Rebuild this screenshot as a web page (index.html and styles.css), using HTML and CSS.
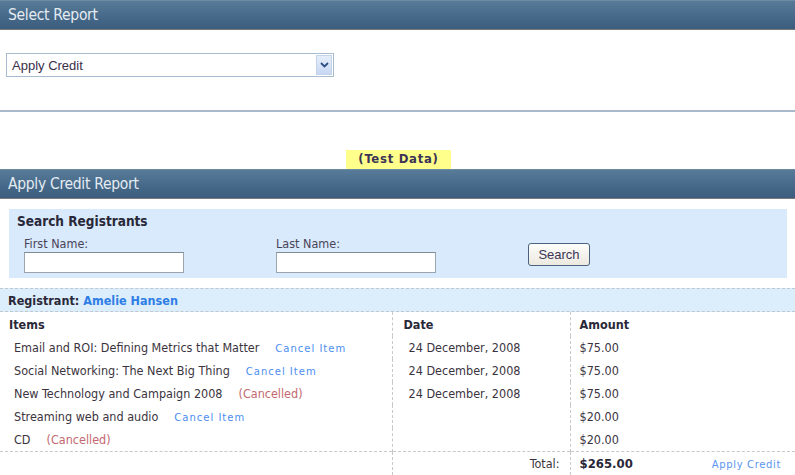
FILE: index.html
```html
<!DOCTYPE html>
<html>
<head>
<meta charset="utf-8">
<link rel="stylesheet" href="styles.css">
</head>
<body>
<div class="hdr"><span class="hdr-title">Select Report</span></div>
<div class="select-area">
  <div class="select">
    <span class="select-text">Apply Credit</span>
    <span class="select-btn"><svg width="9" height="6" viewBox="0 0 9 6"><path d="M1 1 L4.5 4.5 L8 1" fill="none" stroke="#2d4f86" stroke-width="1.8"/></svg></span>
  </div>
</div>
<div class="test-area"><span class="test">(Test Data)</span></div>
<div class="hdr"><span class="hdr-title">Apply Credit Report</span></div>
<div class="search">
  <div class="search-title">Search Registrants</div>
  <div class="search-row">
    <div class="field">
      <label class="lbl">First Name:</label>
      <div class="input"></div>
    </div>
    <div class="field">
      <label class="lbl">Last Name:</label>
      <div class="input"></div>
    </div>
    <div class="btn">Search</div>
  </div>
</div>
<div class="registrant"><b>Registrant:</b> <span class="name">Amelie Hansen</span></div>
<table class="items">
  <colgroup><col class="w1"><col class="w2"><col></colgroup>
  <tr class="head">
    <th class="c1">Items</th><th class="c2">Date</th><th class="c3">Amount</th>
  </tr>
  <tr>
    <td class="c1"><span class="it">Email and ROI: Defining Metrics that Matter</span><span class="cancel">Cancel Item</span></td>
    <td class="c2"><span class="dt">24 December, 2008</span></td><td class="c3">$75.00</td>
  </tr>
  <tr>
    <td class="c1"><span class="it">Social Networking: The Next Big Thing</span><span class="cancel">Cancel Item</span></td>
    <td class="c2"><span class="dt">24 December, 2008</span></td><td class="c3">$75.00</td>
  </tr>
  <tr>
    <td class="c1"><span class="it">New Technology and Campaign 2008</span><span class="cancelled">(Cancelled)</span></td>
    <td class="c2"><span class="dt">24 December, 2008</span></td><td class="c3">$75.00</td>
  </tr>
  <tr>
    <td class="c1"><span class="it">Streaming web and audio</span><span class="cancel">Cancel Item</span></td>
    <td class="c2"></td><td class="c3">$20.00</td>
  </tr>
  <tr>
    <td class="c1"><span class="it">CD</span><span class="cancelled">(Cancelled)</span></td>
    <td class="c2"></td><td class="c3">$20.00</td>
  </tr>
  <tr class="total">
    <td class="c1"></td>
    <td class="c2 tl">Total:</td>
    <td class="c3"><span class="sum">$265.00</span><span class="apply">Apply Credit</span></td>
  </tr>
</table>
</body>
</html>
```

FILE: styles.css
```css
html, body {
  margin: 0;
  padding: 0;
  background: #fff;
  font-family: "DejaVu Sans Condensed", "DejaVu Sans", sans-serif;
  font-size: 12.5px;
  color: #3b3440;
}
.hdr {
  height: 28px;
  background: linear-gradient(#587b99, #486b8b 50%, #3c5d7d);
  border-top: 1px solid #6d8aa3;
  border-bottom: 1px solid #7a7a7a;
  display: flex;
  align-items: center;
  padding-left: 8px;
}
.hdr-title {
  color: #e4ebf1;
  font-size: 15.5px;
  letter-spacing: -0.3px;
}
.select-area {
  height: 82px;
  border-bottom: 2px solid #a7b9ca;
  padding: 23px 0 0 6px;
  box-sizing: border-box;
}
.select {
  width: 328px;
  height: 24px;
  box-sizing: border-box;
  border: 1px solid #a8bccf;
  display: flex;
  align-items: center;
  justify-content: space-between;
  padding: 0 1px 0 5px;
}
.select-text {
  font-family: "Liberation Sans", sans-serif;
  font-size: 13px;
  color: #3a2f4a;
}
.select-btn {
  width: 16px;
  height: 20px;
  background: linear-gradient(#e6eefa, #c8d8f3);
  border: 1px solid #c4d3ea;
  box-sizing: border-box;
  display: flex;
  align-items: center;
  justify-content: center;
}
.test-area {
  height: 57px;
  display: flex;
  justify-content: center;
  align-items: flex-end;
}
.test {
  background: #ffff8c;
  font-weight: bold;
  font-size: 13px;
  color: #3b3454;
  padding: 1px 12px 0 12px;
  height: 19px;
  box-sizing: border-box;
  margin-right: -2px;
  letter-spacing: 0.7px;
}
.search {
  margin: 10px 8px 0 9px;
  background: #d8eafc;
  height: 69px;
  box-sizing: border-box;
  padding: 4px 0 0 8px;
}
.search-title {
  font-weight: bold;
  font-size: 13.5px;
  color: #2a2838;
}
.search-row {
  display: flex;
  align-items: flex-end;
  padding-left: 7px;
  margin-top: 8px;
}
.field {
  display: flex;
  flex-direction: column;
  width: 252px;
}
.lbl {
  color: #4a4358;
  font-size: 12.5px;
  line-height: 14px;
}
.input {
  width: 160px;
  height: 21px;
  box-sizing: border-box;
  margin-top: 1px;
  background: #fff;
  border: 1px solid #9aa4ae;
  border-top-color: #7f8a96;
}
.btn {
  width: 62px;
  height: 23px;
  box-sizing: border-box;
  border: 1px solid #4a6280;
  border-radius: 3px;
  background: linear-gradient(#fdfdfb, #ece9e0);
  font-family: "Liberation Sans", sans-serif;
  font-size: 13px;
  color: #3c3455;
  display: flex;
  align-items: center;
  justify-content: center;
  margin-bottom: 7px;
}
.registrant {
  margin-top: 10px;
  background: #dcedfc;
  border-top: 1px dashed #bfc7cf;
  border-bottom: 1px dashed #bfc7cf;
  height: 24px;
  box-sizing: border-box;
  padding-left: 8px;
  display: flex;
  align-items: center;
  font-size: 12.5px;
  color: #2a2838;
}
.registrant b { margin-right: 4px; }
.name {
  color: #2f7ee6;
  font-weight: bold;
}
.items {
  width: 100%;
  border-collapse: collapse;
  table-layout: fixed;
}
.w1 { width: 392px; }
.w2 { width: 178px; }
.items th, .items td {
  text-align: left;
  vertical-align: middle;
  white-space: nowrap;
}
.items th {
  font-weight: bold;
  height: 24px;
  padding: 1px 0 0 0;
  box-sizing: border-box;
  font-size: 12.5px;
  color: #2a2838;
}
.items td {
  height: 23px;
  padding: 0;
  box-sizing: border-box;
}
.items .c1 { padding-left: 9px; }
.items .c2 { padding-left: 11px; border-left: 1px dashed #c8c8c8; }
.items .c3 { padding-left: 9px; border-left: 1px dashed #c8c8c8; }
.items td.c1 { padding-left: 14px; }
.items td.c2 { padding-left: 16px; }
.it { margin-right: 16px; }
.cancel {
  color: #4b8ef0;
  font-family: "DejaVu Sans", sans-serif;
  font-size: 10px;
  letter-spacing: 1px;
}
.cancelled {
  color: #c46870;
  font-size: 12.5px;
}
.items tr.total td {
  border-top: 1px dashed #c8c8c8;
  border-bottom: 1px dashed #c8c8c8;
  height: 24px;
}
.items tr.total td.tl {
  text-align: right;
  padding-right: 10px;
}
.sum {
  font-weight: bold;
  font-size: 13px;
  color: #2a2838;
  margin-right: 79px;
}
.apply {
  color: #5b95f0;
  font-family: "DejaVu Sans", sans-serif;
  font-size: 10px;
  letter-spacing: 0.65px;
}
```
